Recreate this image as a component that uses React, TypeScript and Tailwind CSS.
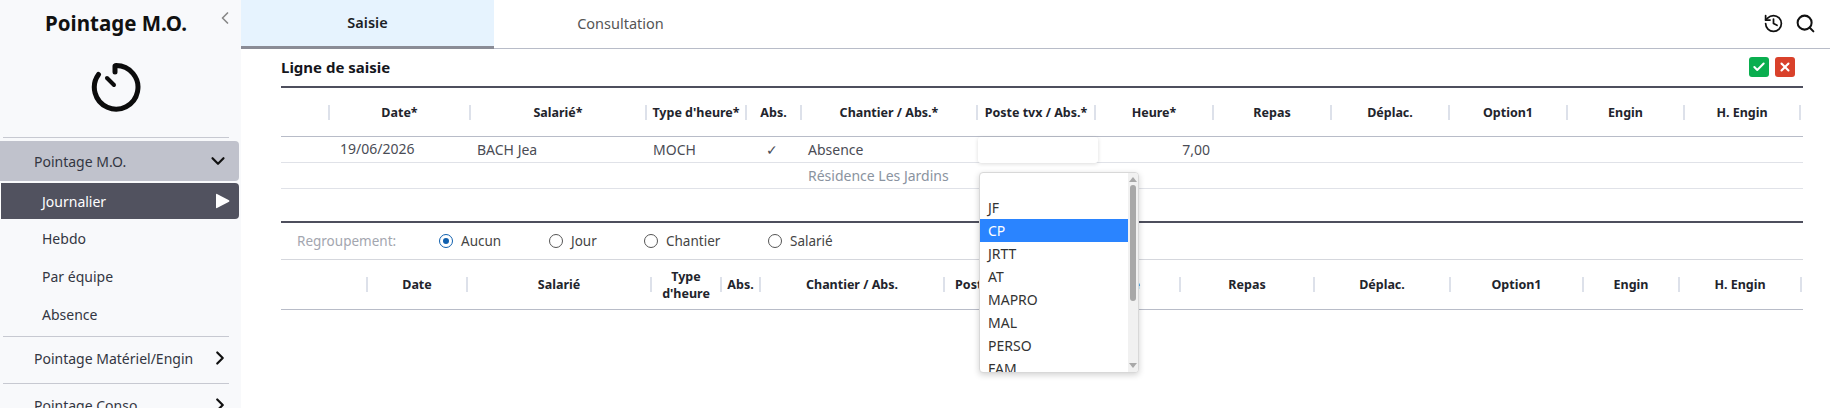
import { ChevronDown, ChevronLeft, ChevronRight, Check, X, History, Search } from "lucide-react";

const font = "font-['Noto_Sans','Open_Sans',sans-serif]";

const cols1 = [
  ["", 49], ["Date*", 141], ["Salarié*", 176], ["Type d'heure*", 100], ["Abs.", 55], ["Chantier / Abs.*", 176],
  ["Poste tvx / Abs.*", 118], ["Heure*", 118], ["Repas", 118], ["Déplac.", 118], ["Option1", 118], ["Engin", 117], ["H. Engin", 116],
] as const;

const cols2 = [
  ["", 87], ["Date", 100], ["Salarié", 184], ["Type d'heure", 70], ["Abs.", 39], ["Chantier / Abs.", 184],
  ["Poste tvx / Abs.", 118], ["Heure", 118], ["Repas", 134], ["Déplac.", 136], ["Option1", 133], ["Engin", 96], ["H. Engin", 122],
] as const;

function HeaderRow({ cols, h }: { cols: readonly (readonly [string, number])[]; h: string }) {
  return (
    <div className={`flex items-center ${h} border-b border-[#b8bcc8]`}>
      {cols.map(([label, w], i) => (
        <div
          key={i}
          style={{ width: w }}
          className="shrink-0 h-[15px] flex items-center justify-center text-center border-r-2 border-[#dde1ea] text-[12.5px] leading-[17px] font-bold text-[#22242c]"
        >
          {label}
        </div>
      ))}
    </div>
  );
}

function NavHead({ label, open }: { label: string; open?: boolean }) {
  return (
    <div className={`h-10 flex items-center pl-[34px] pr-[10px] justify-between text-[14px] text-[#333642] ${open ? "bg-[#c0c2cc] rounded-r-[4px] mr-[2px]" : ""}`}>
      <span>{label}</span>
      {open ? <ChevronDown size={22} strokeWidth={2.4} className="text-[#111]" /> : <ChevronRight size={22} strokeWidth={2.4} className="text-[#111]" />}
    </div>
  );
}

const options = ["", "JF", "CP", "JRTT", "AT", "MAPRO", "MAL", "PERSO", "FAM"];

export default function App() {
  return (
    <div className={`${font} relative flex w-[1830px] h-[408px] overflow-hidden bg-white`}>
      <aside className="w-[241px] shrink-0 bg-[#f8f9fb]">
        <div className="relative h-[137px] flex flex-col items-center pr-[9px]">
          <h1 className="mt-[8px] text-[20.5px] leading-[30px] font-bold text-[#111]">Pointage M.O.</h1>
          <ChevronLeft size={20} strokeWidth={2} className="absolute right-[6px] top-[8px] text-[#888]" />
          <svg width="52" height="52" viewBox="0 0 52 52" className="mt-[23px]" fill="none" stroke="#0c0c0c" strokeLinecap="round">
            <path d="M23 9.4 A 22 22 0 1 1 9 12.5" strokeWidth="0" />
            <path d="M26 4.5 A 21.8 21.8 0 1 1 8.5 13.5" strokeWidth="5" />
            <path d="M25 5 v6" strokeWidth="5" />
            <path d="M17 17 L24 24" strokeWidth="4" />
          </svg>
        </div>
        <div className="mx-[3px] w-[226px] border-t border-[#c7c9d1]" />
        <div className="mt-[3px]"><NavHead label="Pointage M.O." open /></div>
        <div className="mt-[2px] mr-[2px] h-[36px] flex items-center justify-between pl-[41px] pr-[9px] bg-[#51525f] rounded-r-[4px] text-[14px] text-white border-l-[1px] border-white">
          <span>Journalier</span>
          <svg width="15" height="16" viewBox="0 0 15 16"><path d="M1 1.5 Q1 0.5 2 1 L14 7.3 Q15 8 14 8.7 L2 15 Q1 15.5 1 14.5 Z" fill="white" /></svg>
        </div>
        {["Hebdo", "Par équipe", "Absence"].map((t) => (
          <div key={t} className="h-[38px] flex items-center pl-[42px] text-[14px] text-[#333642]">{t}</div>
        ))}
        <div className="mt-[3px] mx-[3px] w-[226px] border-t border-[#c7c9d1]" />
        <div className="mt-[1px]"><NavHead label="Pointage Matériel/Engin" /></div>
        <div className="mt-[5px] mx-[3px] w-[226px] border-t border-[#c7c9d1]" />
        <div className="mt-[1px]"><NavHead label="Pointage Conso" /></div>
      </aside>

      <main className="flex-1 min-w-0">
        <div className="h-[49px] flex items-stretch border-b border-[#b8bcc8] relative">
          <div className="w-[253px] -mb-px bg-[#e6f3fe] border-b-[3px] border-[#8a8c96] flex items-center justify-center text-[14.5px] font-semibold text-[#1c1e26] pb-[1px]">Saisie</div>
          <div className="w-[253px] flex items-center justify-center text-[14.5px] text-[#555]">Consultation</div>
          <div className="ml-auto flex items-center gap-[11px] pr-[14px] pb-[2px]">
            <History size={21} strokeWidth={2} className="text-[#111]" />
            <Search size={21} strokeWidth={2.3} className="text-[#111]" />
          </div>
        </div>

        <div className="ml-[40px] w-[1522px]">
          <div className="h-[39px] flex items-center justify-between border-b-2 border-[#4e4f5d] pr-[8px]">
            <span className="text-[15px] font-bold text-[#15161c]">Ligne de saisie</span>
            <div className="flex gap-[6px] mb-[1px]">
              <span className="w-5 h-5 rounded-[3px] bg-[#0aae4f] flex items-center justify-center"><Check size={14} strokeWidth={3.5} className="text-white" /></span>
              <span className="w-5 h-5 rounded-[3px] bg-[#d9412b] flex items-center justify-center"><X size={14} strokeWidth={3.5} className="text-white" /></span>
            </div>
          </div>

          <HeaderRow cols={cols1} h="h-[49px]" />

          <div className="h-[26px] flex items-center border-b border-[#e0e2e8] text-[14px] text-[#4a4c55]">
            <div className="w-[49px]" />
            <div className="w-[141px] pl-[10px] pb-[2px]">19/06/2026</div>
            <div className="w-[176px] pl-[6px]">BACH Jea</div>
            <div className="w-[100px] pl-[6px]">MOCH</div>
            <div className="w-[55px] text-center pr-[5px]">✓</div>
            <div className="w-[176px] pl-[6px]">Absence</div>
            <div className="w-[120px] h-[26px] mt-px bg-white rounded-[3px] shadow-[0_1px_4px_rgba(0,0,0,0.14)]" />
            <div className="w-[116px] pr-[4px] text-right">7,00</div>
          </div>
          <div className="h-[26px] flex items-center border-b border-[#e0e2e8] text-[14px] text-[#8a93a0] pl-[527px]">Résidence Les Jardins</div>

          <div className="mt-[32px] h-[39px] flex items-center border-t-2 border-b border-t-[#4e4f5d] border-b-[#d5d7dd] text-[13.5px] text-[#444] pl-[16px]">
            <span className="w-[142px] text-[#a3a6af]">Regroupement:</span>
            <label className="w-[110px] flex items-center gap-[8px]"><span className="w-[14px] h-[14px] rounded-full border border-[#0f5fae] flex items-center justify-center"><span className="w-[6px] h-[6px] rounded-full bg-[#0f5fae]" /></span>Aucun</label>
            <label className="w-[95px] flex items-center gap-[8px]"><span className="w-[14px] h-[14px] rounded-full border border-[#555]" />Jour</label>
            <label className="w-[124px] flex items-center gap-[8px]"><span className="w-[14px] h-[14px] rounded-full border border-[#555]" />Chantier</label>
            <label className="flex items-center gap-[8px]"><span className="w-[14px] h-[14px] rounded-full border border-[#555]" />Salarié</label>
          </div>

          <HeaderRow cols={cols2} h="h-[50px]" />
        </div>
      </main>

      <div className="absolute left-[979px] top-[172px] w-[160px] h-[201px] bg-white border border-[#d8d8d8] rounded-[4px] shadow-[0_2px_6px_rgba(0,0,0,0.18)] overflow-hidden flex text-[14px] text-[#333]">
        <div className="flex-1 min-w-0">
          {options.map((o, i) => (
            <div key={i} className={`h-[23px] leading-[23px] px-[8px] ${o === "CP" ? "bg-[#2a84ff] text-white" : ""}`}>{o}</div>
          ))}
        </div>
        <div className="w-[10px] bg-[#f1f1f1] flex flex-col items-center">
          <span className="mt-[4px] w-0 h-0 border-x-[4px] border-x-transparent border-b-[5px] border-b-[#a8a8a8]" />
          <span className="mt-[3px] w-[6px] h-[116px] rounded-full bg-[#a8a8a8]" />
          <span className="mt-auto mb-[4px] w-0 h-0 border-x-[4px] border-x-transparent border-t-[5px] border-t-[#a8a8a8]" />
        </div>
      </div>
    </div>
  );
}
